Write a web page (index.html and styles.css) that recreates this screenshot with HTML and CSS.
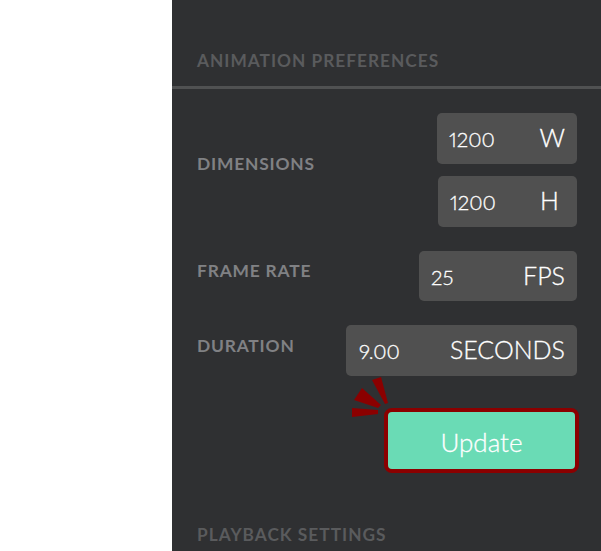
FILE: index.html
```html
<!DOCTYPE html>
<html lang="en">
<head>
    <meta charset="UTF-8">
    <title>Animation Preferences</title>
    <link rel="stylesheet" href="styles.css">
</head>
<body>
    <div class="panel">
        <h2 class="section-title">Animation Preferences</h2>
        <div class="divider"></div>

        <div class="row row-dimensions">
            <span class="label">Dimensions</span>
            <div class="fields">
                <div class="field field-w"><span class="value">1200</span><span class="unit">W</span></div>
                <div class="field field-h"><span class="value">1200</span><span class="unit">H</span></div>
            </div>
        </div>

        <div class="row row-rate">
            <span class="label">Frame Rate</span>
            <div class="field field-fps"><span class="value">25</span><span class="unit">FPS</span></div>
        </div>

        <div class="row row-duration">
            <span class="label">Duration</span>
            <div class="field field-sec"><span class="value">9.00</span><span class="unit">SECONDS</span></div>
        </div>

        <div class="actions">
            <button class="button">
                Update
                <svg class="spark" width="40" height="45" viewBox="0 0 40 45">
                    <polygon points="22,5 31,2 38,28 35,29"/>
                    <polygon points="12,13 4,25 28,33 31,30"/>
                    <polygon points="2,33 2,42 28,39 28,35"/>
                </svg>
            </button>
        </div>

        <h2 class="section-title section-playback">Playback Settings</h2>
    </div>
</body>
</html>
```

FILE: styles.css
```css
html, body {
    margin: 0;
    height: 551px;
    overflow: hidden;
    background-color: #fff;
}
.panel {
    box-sizing: border-box;
    margin-left: 172px;
    height: 551px;
    overflow: hidden;
    padding-top: 50px;
    background-color: #2f3032;
    font-family: Lato, sans-serif;
}
.section-title {
    margin: 0;
    padding-left: 25px;
    height: 22px;
    line-height: 22px;
    font-size: 17.3px;
    font-weight: 700;
    letter-spacing: 1px;
    text-transform: uppercase;
    color: #5a5b5d;
}
.divider {
    margin-top: 14px;
    height: 3px;
    background-color: #505152;
}
.row {
    display: flex;
    justify-content: space-between;
    align-items: flex-start;
    padding: 0 24px 0 25px;
}
.row-dimensions {
    margin-top: 24px;
}
.row-rate {
    margin-top: 24px;
}
.row-duration {
    margin-top: 24px;
}
.label {
    font-size: 17.4px;
    font-weight: 700;
    letter-spacing: 0.8px;
    text-transform: uppercase;
    color: #808184;
}
.row-dimensions .label {
    margin-top: 40px;
}
.row-rate .label {
    margin-top: 9px;
}
.row-duration .label {
    margin-top: 10px;
}
.fields {
    display: flex;
    flex-direction: column;
    align-items: flex-end;
    gap: 12.5px;
}
.field {
    box-sizing: border-box;
    display: flex;
    justify-content: space-between;
    align-items: center;
    height: 50.5px;
    padding: 0 12px;
    border-radius: 5px;
    background-color: #505050;
    font-size: 20.5px;
    font-variant-numeric: proportional-nums;
    font-weight: 300;
    color: #fff;
    -webkit-text-stroke: 0.3px #fff;
}
.value {
    padding-top: 2px;
}
.unit {
    padding-bottom: 2px;
    font-size: 25px;
}
.field-w { width: 140px; }
.field-h { width: 139px; padding-right: 18px; }
.field-fps { width: 158px; }
.field-sec { width: 231px; padding-left: 13px; }
.actions {
    display: flex;
    justify-content: flex-end;
    margin-top: 32px;
    padding-right: 22px;
}
.button {
    position: relative;
    box-sizing: border-box;
    width: 195px;
    height: 65px;
    padding: 3px 0 0;
    border: 4px solid #8b0000;
    border-radius: 8px;
    background-color: #6adbb5;
    font-family: Lato, sans-serif;
    font-size: 26px;
    font-weight: 300;
    color: #fff;
    -webkit-text-stroke: 0.3px #fff;
}
.spark {
    position: absolute;
    left: -38px;
    top: -37px;
    fill: #8b0000;
}
.section-playback {
    margin-top: 51px;
}
```
